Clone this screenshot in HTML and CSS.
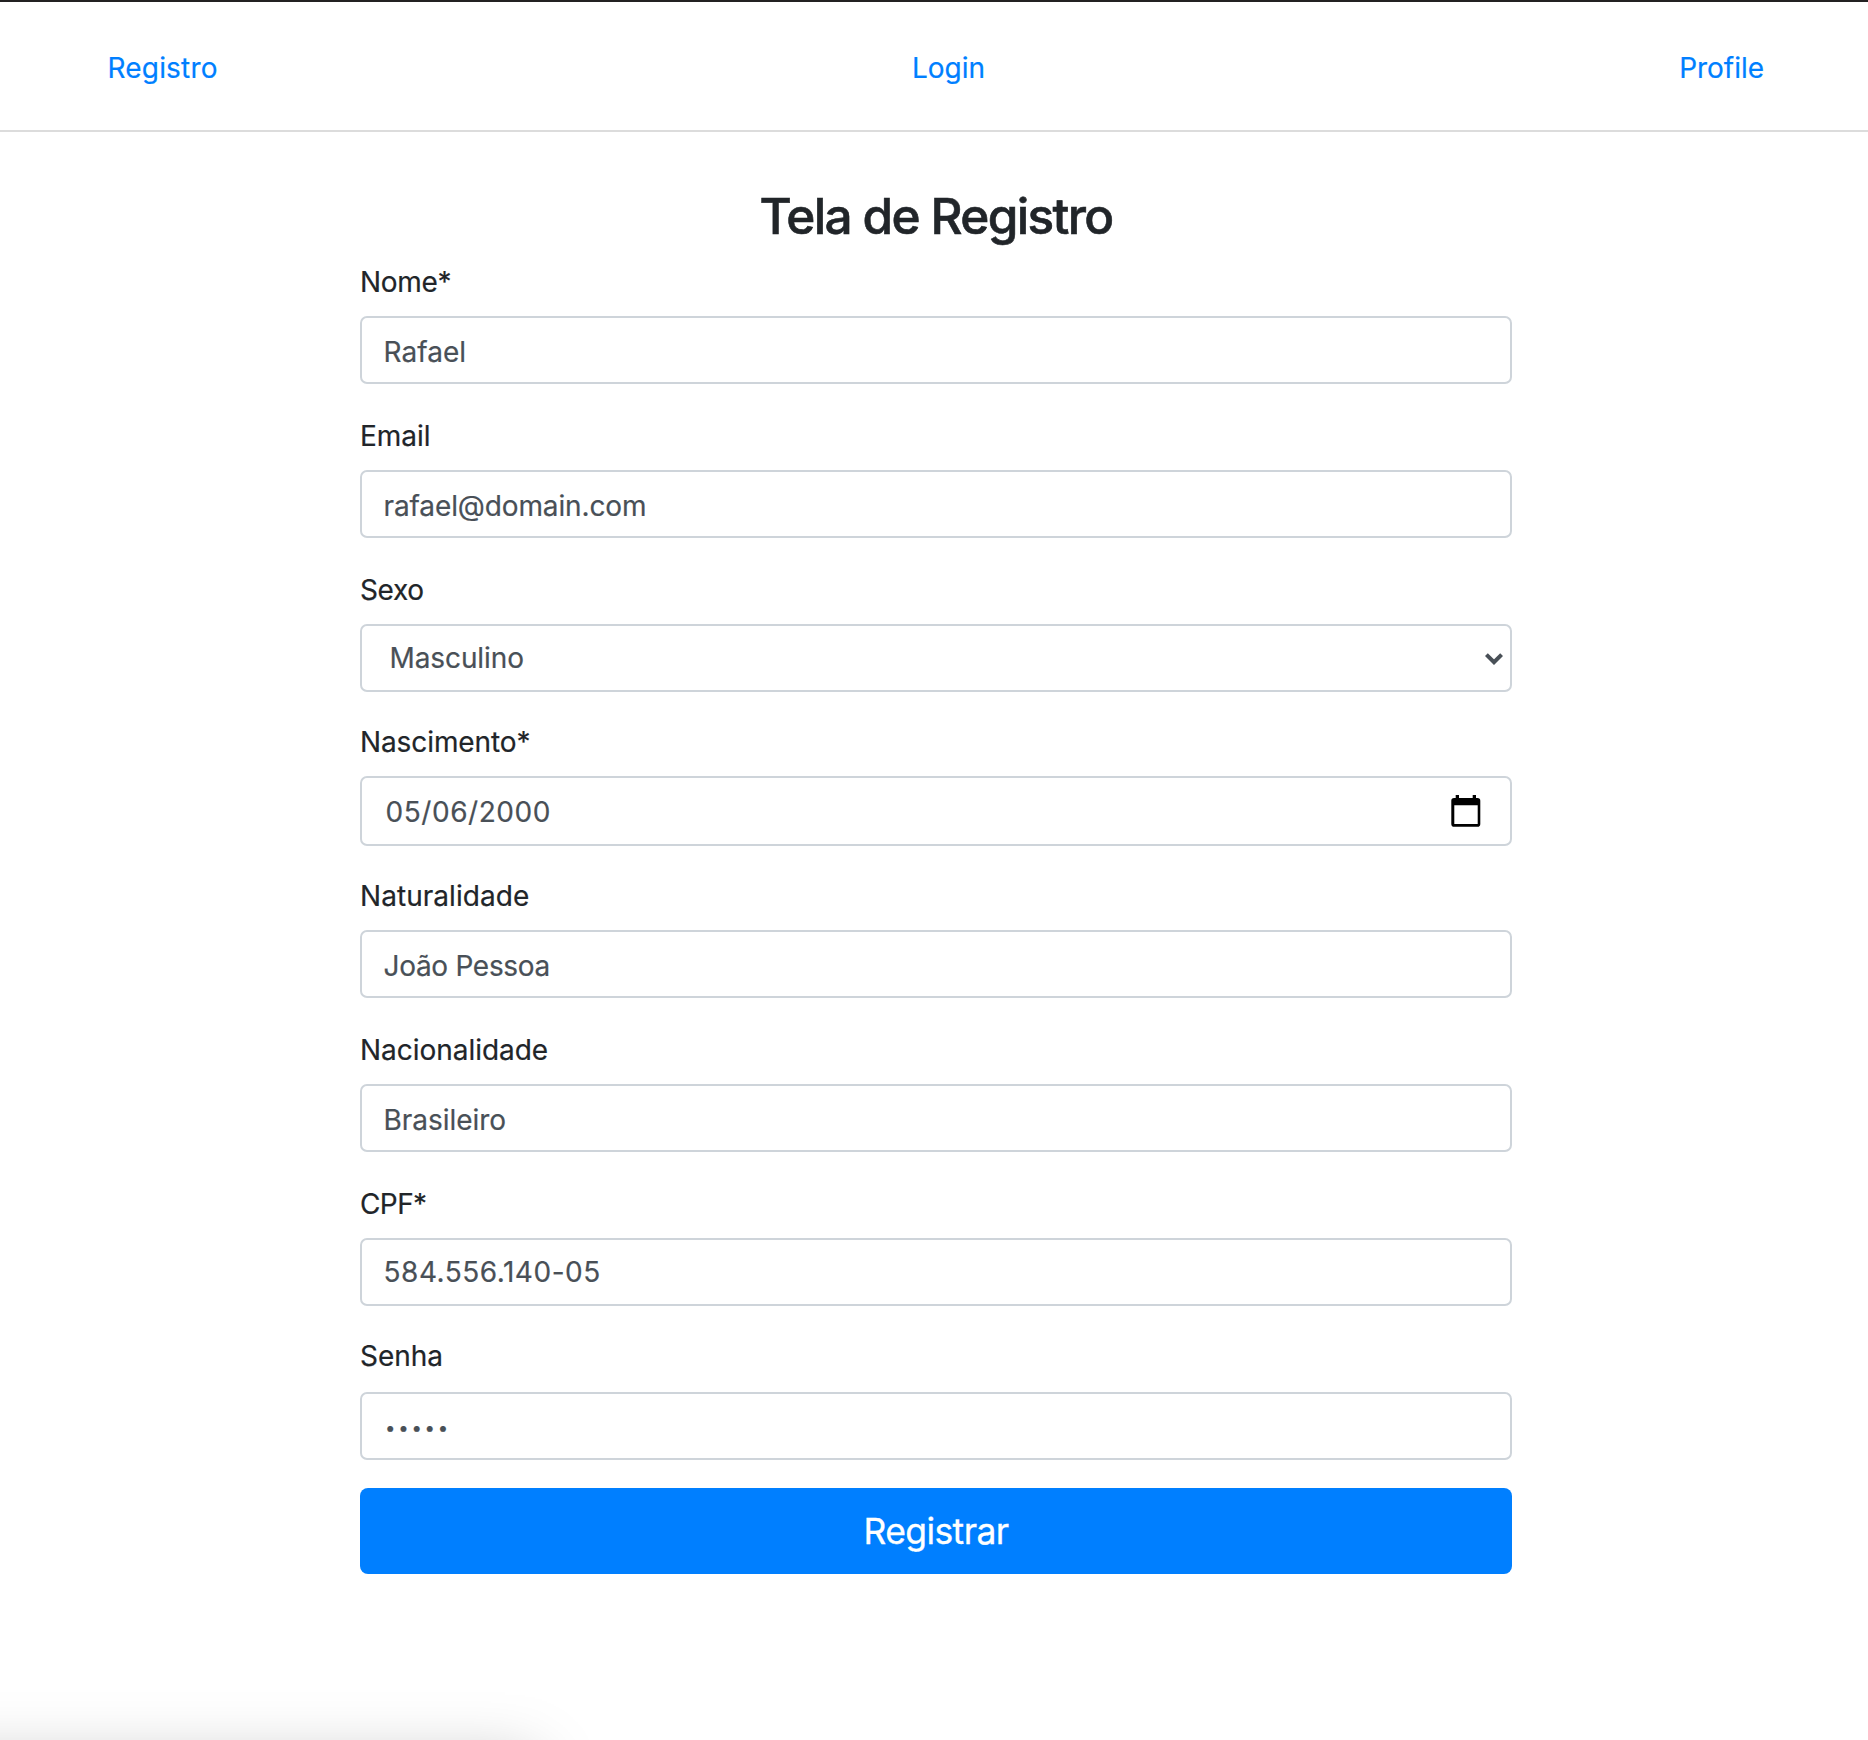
FILE: index.html
```html
<!DOCTYPE html>
<html lang="pt-BR">
<head>
<meta charset="utf-8">
<title>Tela de Registro</title>
<link rel="stylesheet" href="styles.css">
</head>
<body>
<nav class="navbar">
  <a class="nav-link spaced" href="#">Registro</a>
  <a class="nav-link" href="#">Login</a>
  <a class="nav-link" href="#">Profile</a>
</nav>
<main class="container">
  <h1 class="title">Tela de Registro</h1>
  <form class="form">
    <div class="form-group">
      <label class="label label-nome">Nome*</label>
      <div class="form-control lowered rafael">Rafael</div>
    </div>
    <div class="form-group">
      <label class="label">Email</label>
      <div class="form-control lowered email">rafael@domain.com</div>
    </div>
    <div class="form-group tight">
      <label class="label label-sexo">Sexo</label>
      <div class="form-control select">
        <span>Masculino</span>
        <svg class="chevron" viewBox="0 0 18 12" width="18" height="12"><path d="M1.4 1.6 9 9.2 16.6 1.6" fill="none" stroke="#495057" stroke-width="4"/></svg>
      </div>
    </div>
    <div class="form-group tight">
      <label class="label label-nasc">Nascimento*</label>
      <div class="form-control lowered date">
        <span>05/06/2000</span>
        <svg class="calendar" viewBox="0 0 30 32" width="30" height="32"><path d="M4.7 0H8v3h13.700V0H25v3h1.500a2.800 2.800 0 0 1 2.800 2.800v23.100a2.800 2.800 0 0 1-2.800 2.800H3.100A2.800 2.800 0 0 1 .3 28.900V5.800A2.800 2.800 0 0 1 3.100 3h1.600zM3.300 10.300V29h23.400V10.300z" fill="#000" fill-rule="evenodd"/></svg>
      </div>
    </div>
    <div class="form-group">
      <label class="label label-nat">Naturalidade</label>
      <div class="form-control lowered joao">João Pessoa</div>
    </div>
    <div class="form-group">
      <label class="label">Nacionalidade</label>
      <div class="form-control lowered">Brasileiro</div>
    </div>
    <div class="form-group tight">
      <label class="label label-cpf">CPF*</label>
      <div class="form-control cpf">584.556.140-05</div>
    </div>
    <div class="form-group tight last">
      <label class="label">Senha</label>
      <div class="form-control password">•••••</div>
    </div>
    <button class="btn" type="button">Registrar</button>
  </form>
</main>
<div class="corner-shadow"></div>
</body>
</html>
```
FILE: styles.css
```css
* { box-sizing: border-box; }

html, body { height: 100%; }

body {
  margin: 0;
  background: #fff;
  color: #212529;
  font-family: Inter, "Liberation Sans", sans-serif;
  font-size: 28px;
  font-weight: 400;
  line-height: 44px;
  letter-spacing: -0.03px;
  -webkit-text-stroke: 0.2px currentColor;
}

.navbar {
  display: flex;
  justify-content: space-between;
  align-items: flex-start;
  height: 132px;
  padding: 44px 104px 0 107.5px;
  border-top: 2px solid #232122;
  border-bottom: 2px solid #dcdcdc;
}

.nav-link { color: #007fff; text-decoration: none; }
.spaced { letter-spacing: 0.18px; }

.container { width: 1152px; margin: 0 auto 0 360px; padding-top: 54px; }

.title {
  margin: 0 0 14px;
  font-size: 49.5px;
  line-height: 60px;
  font-weight: 500;
  letter-spacing: -1.65px;
  text-align: center;
  -webkit-text-stroke: 0.6px currentColor;
}

.form-group { margin-bottom: 30px; }
.form-group.tight { margin-bottom: 28px; }

.label { display: block; margin-bottom: 12px; }
.last .label { margin-bottom: 14px; }
.label-nome { letter-spacing: -0.3px; }
.label-sexo { letter-spacing: -0.35px; }
.label-nasc { letter-spacing: -0.1px; }
.label-nat { letter-spacing: 0.05px; }
.label-cpf { letter-spacing: -0.6px; }

.form-control {
  height: 68px;
  padding: 0 21.5px;
  border: 2px solid #ced4da;
  border-radius: 7px;
  background: #fff;
  color: #495057;
  line-height: 64px;
}

.lowered { padding-top: 4px; line-height: 60px; }
.rafael { letter-spacing: 0.05px; }
.email { letter-spacing: -0.12px; }
.joao { letter-spacing: -0.3px; }
.cpf { letter-spacing: 0.52px; }

.select,
.date { display: flex; justify-content: space-between; align-items: flex-start; }
.select { padding: 0 7px 0 27.5px; letter-spacing: -0.1px; }
.chevron { margin-top: 27px; }
.date { height: 70px; padding: 4px 29px 0 23.5px; letter-spacing: 0.55px; }
.calendar { margin-top: 13px; }

.password { padding: 3px 23px 0; font-size: 18.5px; line-height: 60px; letter-spacing: 2.8px; }

.btn {
  display: block;
  width: 100%;
  height: 86px;
  padding: 1px 0 0;
  border: 0;
  border-radius: 8px;
  background: #007fff;
  color: #fff;
  font: 400 35.5px/85px Inter, "Liberation Sans", sans-serif;
  letter-spacing: -0.6px;
  -webkit-text-stroke: 0.3px currentColor;
}

/* soft shadow rising from the lower left edge */
.corner-shadow {
  position: fixed;
  left: 0;
  bottom: 0;
  width: 640px;
  height: 80px;
  overflow: hidden;
}

.corner-shadow::before {
  content: "";
  position: absolute;
  left: -100px;
  top: 100px;
  width: 635px;
  height: 200px;
  box-shadow: 0 0 60px rgba(0, 0, 0, 0.25);
}
```
